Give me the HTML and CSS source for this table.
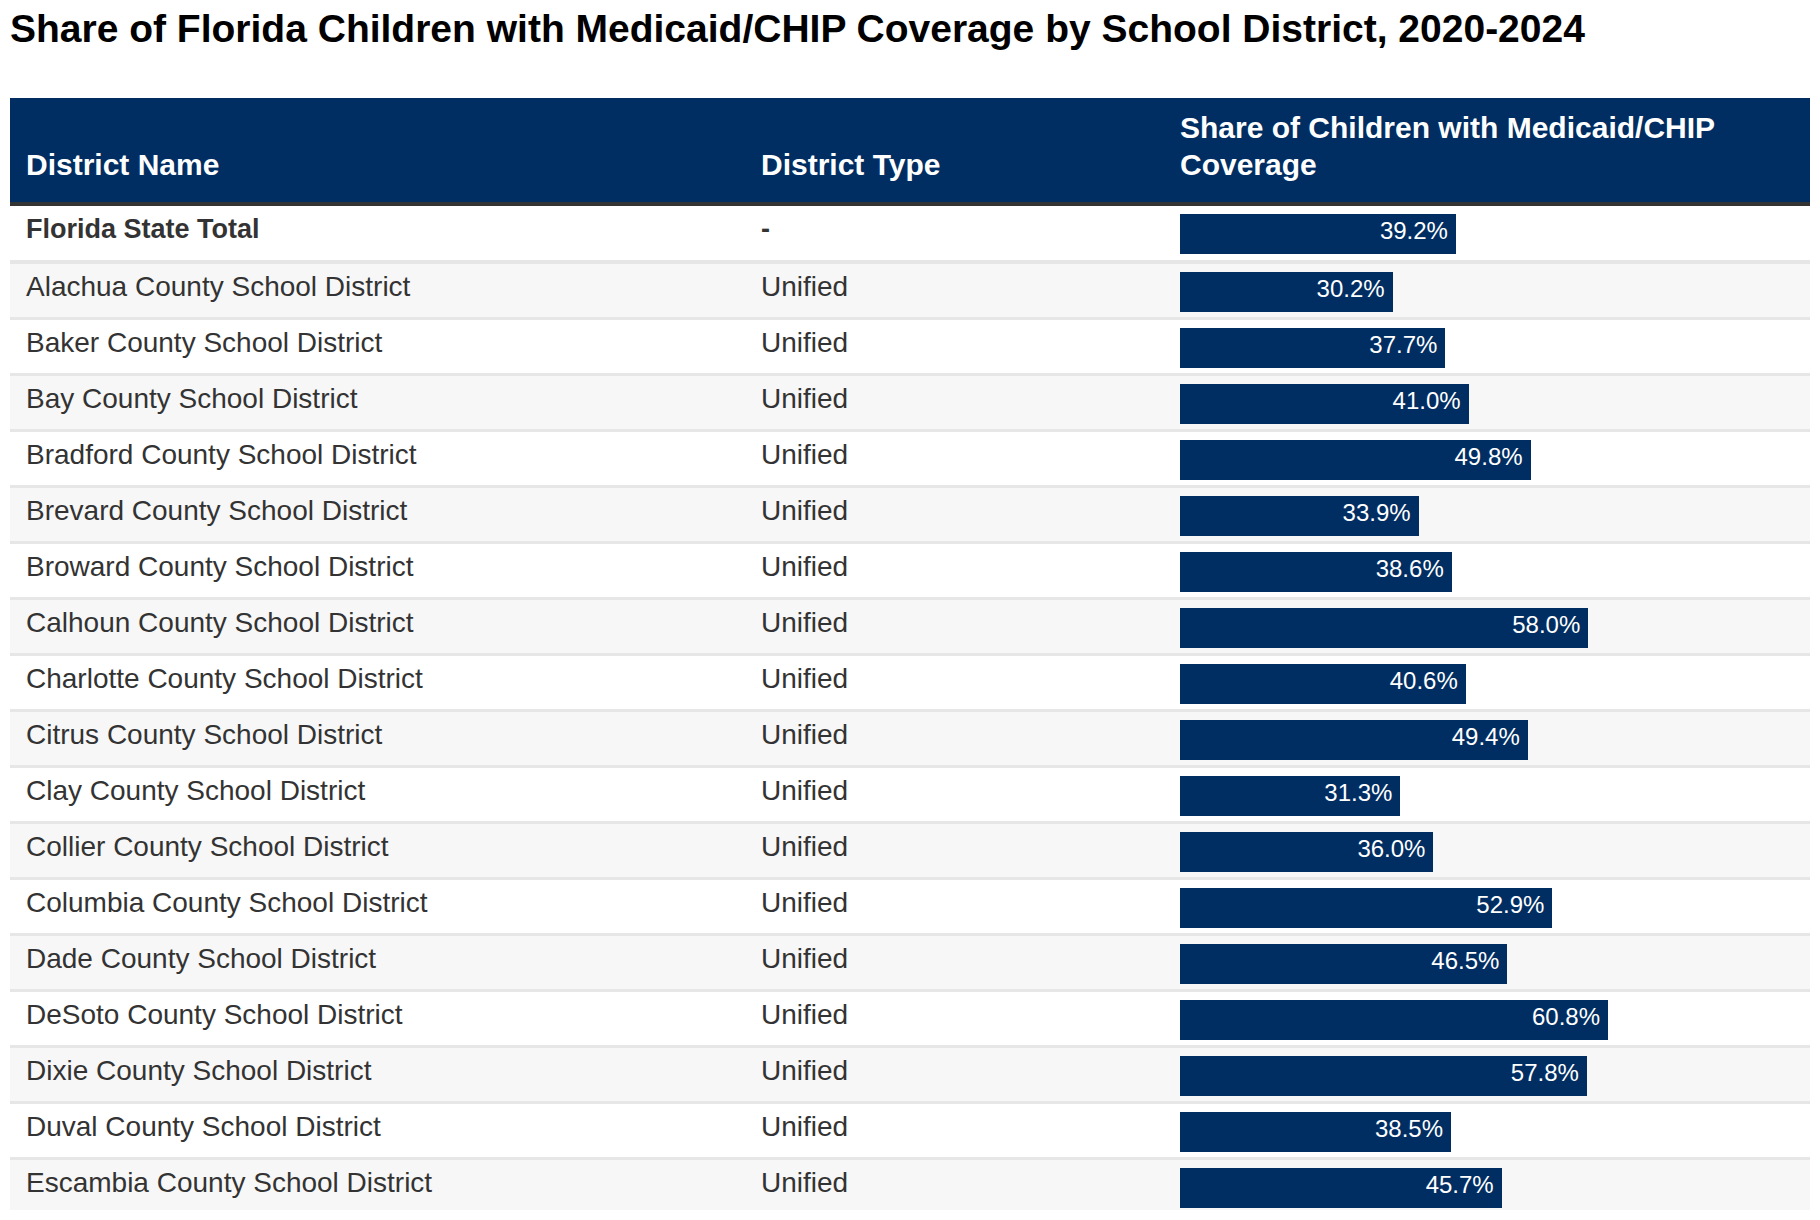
FILE: index.html
```html
<!DOCTYPE html>
<html lang="en">
<head>
<meta charset="utf-8">
<title>Share of Florida Children with Medicaid/CHIP Coverage by School District, 2020-2024</title>
<link rel="stylesheet" href="styles.css">
</head>
<body>
<div class="page">
  <h1 class="title">Share of Florida Children with Medicaid/CHIP Coverage by School District, 2020-2024</h1>
  <table class="data">
    <colgroup>
      <col class="c-name">
      <col class="c-type">
      <col class="c-share">
    </colgroup>
    <thead>
      <tr>
        <th>District Name</th>
        <th>District Type</th>
        <th>Share of Children with Medicaid/CHIP<br>Coverage</th>
      </tr>
    </thead>
    <tbody>
      <tr class="total"><td>Florida State Total</td><td>-</td><td class="barcell"><div class="bar" style="width: calc(39.2 * 7.04px)">39.2%</div></td></tr>
      <tr><td>Alachua County School District</td><td>Unified</td><td class="barcell"><div class="bar" style="width: calc(30.2 * 7.04px)">30.2%</div></td></tr>
      <tr><td>Baker County School District</td><td>Unified</td><td class="barcell"><div class="bar" style="width: calc(37.7 * 7.04px)">37.7%</div></td></tr>
      <tr><td>Bay County School District</td><td>Unified</td><td class="barcell"><div class="bar" style="width: calc(41.0 * 7.04px)">41.0%</div></td></tr>
      <tr><td>Bradford County School District</td><td>Unified</td><td class="barcell"><div class="bar" style="width: calc(49.8 * 7.04px)">49.8%</div></td></tr>
      <tr><td>Brevard County School District</td><td>Unified</td><td class="barcell"><div class="bar" style="width: calc(33.9 * 7.04px)">33.9%</div></td></tr>
      <tr><td>Broward County School District</td><td>Unified</td><td class="barcell"><div class="bar" style="width: calc(38.6 * 7.04px)">38.6%</div></td></tr>
      <tr><td>Calhoun County School District</td><td>Unified</td><td class="barcell"><div class="bar" style="width: calc(58.0 * 7.04px)">58.0%</div></td></tr>
      <tr><td>Charlotte County School District</td><td>Unified</td><td class="barcell"><div class="bar" style="width: calc(40.6 * 7.04px)">40.6%</div></td></tr>
      <tr><td>Citrus County School District</td><td>Unified</td><td class="barcell"><div class="bar" style="width: calc(49.4 * 7.04px)">49.4%</div></td></tr>
      <tr><td>Clay County School District</td><td>Unified</td><td class="barcell"><div class="bar" style="width: calc(31.3 * 7.04px)">31.3%</div></td></tr>
      <tr><td>Collier County School District</td><td>Unified</td><td class="barcell"><div class="bar" style="width: calc(36.0 * 7.04px)">36.0%</div></td></tr>
      <tr><td>Columbia County School District</td><td>Unified</td><td class="barcell"><div class="bar" style="width: calc(52.9 * 7.04px)">52.9%</div></td></tr>
      <tr><td>Dade County School District</td><td>Unified</td><td class="barcell"><div class="bar" style="width: calc(46.5 * 7.04px)">46.5%</div></td></tr>
      <tr><td>DeSoto County School District</td><td>Unified</td><td class="barcell"><div class="bar" style="width: calc(60.8 * 7.04px)">60.8%</div></td></tr>
      <tr><td>Dixie County School District</td><td>Unified</td><td class="barcell"><div class="bar" style="width: calc(57.8 * 7.04px)">57.8%</div></td></tr>
      <tr><td>Duval County School District</td><td>Unified</td><td class="barcell"><div class="bar" style="width: calc(38.5 * 7.04px)">38.5%</div></td></tr>
      <tr><td>Escambia County School District</td><td>Unified</td><td class="barcell"><div class="bar" style="width: calc(45.7 * 7.04px)">45.7%</div></td></tr>
    </tbody>
  </table>
</div>
</body>
</html>
```
FILE: styles.css
```css
html, body {
  margin: 0;
  padding: 0;
  background: #ffffff;
}

body {
  font-family: "Liberation Sans", Arial, Helvetica, sans-serif;
  color: #333333;
}

.page {
  height: 1210px;
  overflow: hidden;
  padding: 0 10px;
}

.title {
  margin: 6px 0 46px 0;
  font-size: 39px;
  line-height: 46px;
  font-weight: 700;
  color: #000000;
}

.data {
  width: 1800px;
  table-layout: fixed;
  border-collapse: separate;
  border-spacing: 0;
}

.c-name { width: 735px; }
.c-type { width: 419px; }
.c-share { width: 646px; }

.data th {
  background: #002e62;
  color: #ffffff;
  font-size: 30px;
  line-height: 37px;
  font-weight: 700;
  text-align: left;
  vertical-align: bottom;
  padding: 11px 16px 19px;
  border-bottom: 4px solid #333333;
}

.data td {
  font-size: 28px;
  line-height: 34px;
  vertical-align: top;
  padding: 6px 16px 0;
  border-bottom: 3px solid #e6e6e6;
}

.data tbody tr:nth-child(even) td {
  background: #f7f7f7;
}

.data td.barcell {
  padding: 8px 16px 5px;
}

.data tr.total td {
  font-weight: 700;
  font-size: 27px;
  border-bottom-width: 4px;
}

.data tr.total td.barcell {
  padding-bottom: 6px;
}

.bar {
  height: 40px;
  box-sizing: border-box;
  background: #002e62;
  color: #ffffff;
  font-size: 24px;
  font-weight: 400;
  line-height: 1;
  display: flex;
  align-items: center;
  justify-content: flex-end;
  padding: 0 8px 7px 0;
}
```
